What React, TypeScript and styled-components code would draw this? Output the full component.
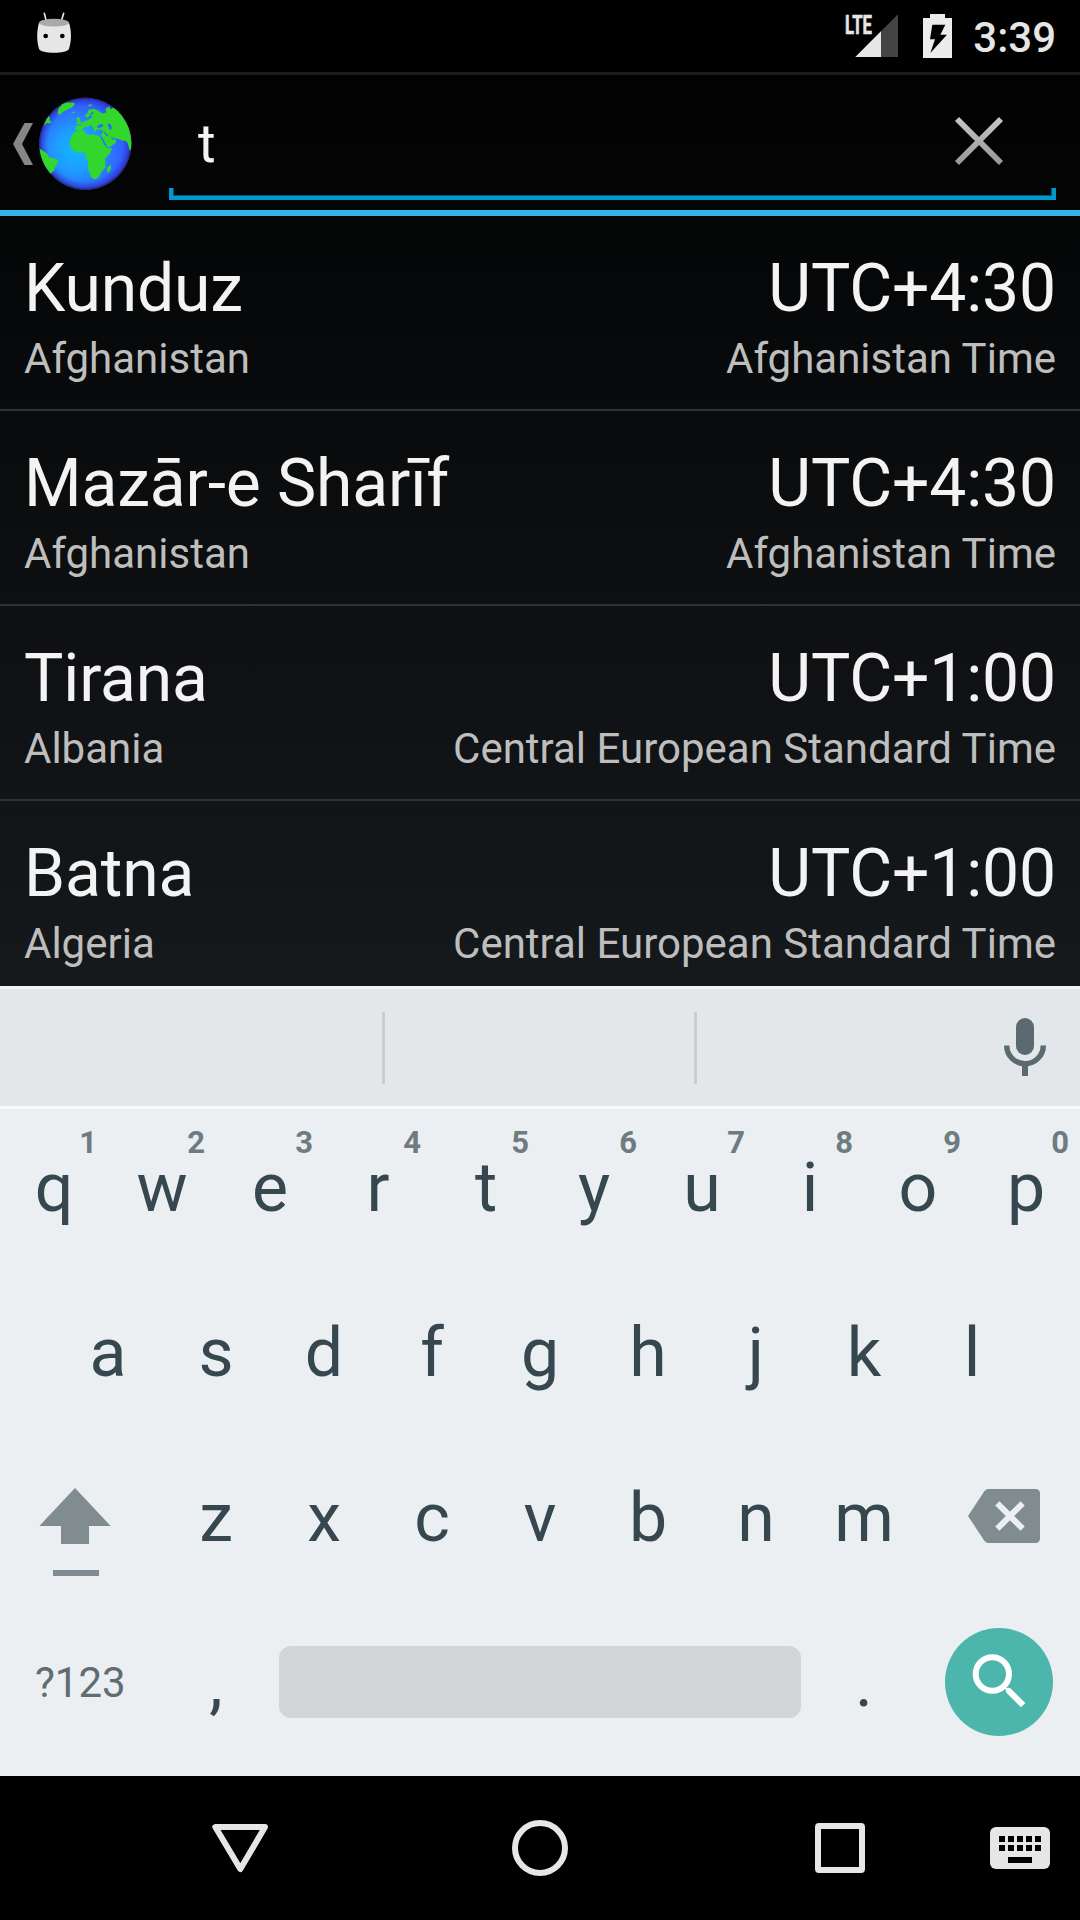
import React from 'react';
import styled, { createGlobalStyle } from 'styled-components';

const GlobalStyle = createGlobalStyle`
  * { box-sizing: border-box; }
  body { margin: 0; background: #000; }
  svg { display: block; flex: none; }
`;

const Screen = styled.div`
  width: 1080px;
  height: 1920px;
  overflow: hidden;
  display: flex;
  flex-direction: column;
  font-family: Roboto, 'Noto Sans', sans-serif;
  background: #000 linear-gradient(180deg, #000000 0, #272d33 1776px) no-repeat;
`;

const StatusBar = styled.header`
  height: 75px;
  flex: none;
  display: flex;
  align-items: flex-start;
  padding: 12px 24px 0 36px;
  background: #000;
  border-bottom: 3px solid #1c1c1c;
  color: #e6e6e6;
`;

const StatusIcons = styled.div`
  margin-left: auto;
  display: flex;
  align-items: flex-start;
`;

const Clock = styled.span`
  margin-left: 21px;
  font-size: 42px;
  font-weight: 500;
  line-height: 49px;
  margin-top: 1px;
`;

const ActionBar = styled.div`
  height: 141px;
  flex: none;
  display: flex;
  align-items: flex-start;
  padding: 20px 24px 0 13px;
  border-bottom: 6px solid #33b5e5;
`;

const UpButton = styled.button`
  display: flex;
  align-items: flex-start;
  padding: 2px 0 0;
  border: 0;
  background: none;
`;

const CaretSlot = styled.span`
  padding-top: 26px;
  width: 26px;
`;

const SearchField = styled.div`
  margin: 0 0 0 auto;
  width: 887px;
  height: 105px;
  display: flex;
  flex-direction: column;
`;

const FieldContent = styled.div`
  height: 93px;
  display: flex;
  justify-content: space-between;
  align-items: flex-start;
  padding: 17px 52px 0 29px;
`;

const Query = styled.span`
  font-size: 54px;
  line-height: 64px;
  color: #f3f3f3;
`;

const ClearSlot = styled.span`
  padding-top: 4px;
`;

const FieldUnderline = styled.div`
  height: 12px;
  flex: none;
  border: 4px solid #0099cc;
  border-width: 0 4px 4px;
  box-shadow: inset 1px -1px 0 #00577a, inset -1px 0 0 #00577a;
`;

const CityList = styled.ul`
  height: 770px;
  flex: none;
  overflow: hidden;
  margin: 0;
  padding: 0;
  list-style: none;
`;

const CityRow = styled.li`
  height: 195px;
  padding: 34px 24px 0;
  border-bottom: 2px solid #303235;
  display: flex;
  flex-direction: column;
  gap: 7px;
`;

const Line = styled.div<{ $primary?: boolean }>`
  display: flex;
  justify-content: space-between;
  white-space: nowrap;
  font-size: ${(p) => (p.$primary ? 66 : 42)}px;
  line-height: ${(p) => (p.$primary ? 77 : 49)}px;
  letter-spacing: ${(p) => (p.$primary ? '-0.15px' : 'normal')};
  color: ${(p) => (p.$primary ? '#f3f3f3' : '#bebebe')};
`;

const Suggestions = styled.div`
  height: 123px;
  flex: none;
  display: flex;
  background: #e3e7e9;
  border-top: 3px solid #f1f4f5;
  border-bottom: 3px solid #f5f7f9;
  padding-top: 23px;
`;

const Suggestion = styled.div<{ $width: number }>`
  width: ${(p) => p.$width}px;
  height: 72px;
  border-right: 3px solid #c9ced1;
`;

const MicSlot = styled.div`
  padding-top: 6px;
  margin: 0 34px 0 auto;
`;

const Keyboard = styled.div`
  height: 667px;
  flex: none;
  background: #ebeff2;
`;

const KeyRow = styled.div<{ $indent?: number }>`
  display: flex;
  height: 165px;
  padding-left: ${(p) => p.$indent ?? 0}px;
`;

const Key = styled.div<{ $width?: number }>`
  position: relative;
  width: ${(p) => p.$width ?? 108}px;
  flex: none;
  padding-top: 39px;
  text-align: center;
  font-size: 68px;
  line-height: 80px;
  color: #37474f;
`;

const KeyHint = styled.span`
  position: absolute;
  top: 15px;
  right: 11px;
  font-size: 31px;
  font-weight: 700;
  line-height: 37px;
  color: #6e7b81;
`;

const IconKey = styled.div<{ $width: number; $top: number; $left: number }>`
  width: ${(p) => p.$width}px;
  flex: none;
  padding: ${(p) => p.$top}px 0 0 ${(p) => p.$left}px;
`;

const SymbolsKey = styled.div`
  width: 162px;
  flex: none;
  padding: 54px 0 0 35px;
  font-size: 42px;
  line-height: 49px;
  color: #5f6d73;
`;

const SpaceKey = styled.div`
  width: 522px;
  height: 72px;
  flex: none;
  margin: 42px 9px 0;
  border-radius: 12px;
  background: #d1d5d8;
`;

const SearchKey = styled.div`
  width: 108px;
  height: 108px;
  flex: none;
  margin: 24px 0 0 27px;
  border-radius: 50%;
  background: #4db6ac;
  padding: 26px 0 0 27px;
`;

const NavBar = styled.nav`
  height: 144px;
  flex: none;
  display: flex;
  align-items: center;
  background: #000;
  padding: 0 30px 0 210px;
`;

const NavIcon = styled.span<{ $gap: number }>`
  margin-left: ${(p) => p.$gap}px;
`;

const DebugHead = () => (
  <svg width="36" height="42" viewBox="108 36 108 126">
    <path d="M133 40L139 64M191 40L184 64" stroke="#e6e6e6" strokeWidth="5" strokeLinecap="round" />
    <path d="M117 68C110 92 110 124 117 146C121 162 203 162 207 146C215 124 215 92 207 68Z" fill="#e6e6e6" />
    <ellipse cx="162" cy="68" rx="45" ry="11.5" fill="#a9a9a9" />
    <circle cx="137" cy="108" r="7" fill="#000" />
    <circle cx="187" cy="108" r="7" fill="#000" />
  </svg>
);

const SignalSlot = styled.span`
  margin-top: -8px;
`;

const Signal = () => (
  <svg width="56" height="56" viewBox="0 -8 56 56">
    <path d="M56 2.300V45H13.300Z" fill="#444" />
    <path d="M39 19.300V45H13.300Z" fill="#e6e6e6" />
    <text x="3" y="21.700" fontFamily="Roboto, sans-serif" fontWeight="700" fontSize="25.500" textLength="27" lengthAdjust="spacingAndGlyphs" fill="#e6e6e6" stroke="#e6e6e6" strokeWidth="0.600">LTE</text>
  </svg>
);

const BatterySlot = styled.span`
  margin-left: 25px;
`;

const Battery = () => (
  <svg width="29" height="48" viewBox="339 36 87 144">
    <path d="M339 54H360V42H405V54H426V174H339Z" fill="#ececec" />
    <path d="M367 74H406L391 104H411L361 159L375 118H360Z" fill="#000" />
  </svg>
);

const Caret = () => (
  <svg width="20" height="42" viewBox="0 0 20 42">
    <path d="M0 21L11.500 0H20L9 21L20 42H11.500Z" fill="#868686" />
  </svg>
);

const Globe = () => (
  <svg width="93" height="93" viewBox="116.500 291.500 279 279">
    <defs>
      <radialGradient id="sea" gradientUnits="userSpaceOnUse" cx="228" cy="450" r="180">
        <stop offset="0" stopColor="#10b8ff" />
        <stop offset="0.35" stopColor="#1e9cff" />
        <stop offset="0.7" stopColor="#2f68ff" />
        <stop offset="1" stopColor="#3048f4" />
      </radialGradient>
      <radialGradient id="rim" gradientUnits="userSpaceOnUse" cx="255.500" cy="431.500" r="138">
        <stop offset="0.82" stopColor="#3030d0" stopOpacity="0" />
        <stop offset="0.95" stopColor="#3030c0" stopOpacity="0.65" />
        <stop offset="1" stopColor="#20206c" stopOpacity="1" />
      </radialGradient>
      <clipPath id="disc"><circle cx="255.500" cy="431.500" r="138" /></clipPath>
    </defs>
    <g clipPath="url(#disc)">
      <rect x="116" y="291" width="280" height="280" fill="url(#sea)" />
      <rect x="116" y="291" width="280" height="280" fill="url(#rim)" />
      <g fill="#33d62c">
        <path d="M172 342L175 326L188 312L200 308L222 309L224 314L215 323L202 329L190 336L179 345Z" />
        <path d="M212 337L222 335L225 338L216 340ZM261 317L270 313L278 315L268 319Z" />
        <path d="M132 377L138 358L145 347L150 357L146 362L153 362L153 368L146 371L140 369L134 378Z" />
        <path d="M116 446L124 450L136 458L144 465L147 473L162 475L174 482L171 495L165 501L162 513L151 521L118 510Z" />
        <path d="M228 362L232 351L238 354L242 366L246 371L233 374L229 369L235 366Z" />
        <path d="M253 348L262 340L265 330L280 327L292 331L299 336L306 341L319 338L316 326L328 319L330 328L340 324L370 345L397 380V452L388 450L382 429L375 423L365 422L352 417L342 415L334 412L326 400L332 411L336 418L348 420L347 429L335 437L324 442L318 437L308 420L301 406L310 395L304 389L290 390L287 397L281 390L276 379L269 376L262 382L254 380L247 389L238 393L226 390L227 378L242 377L243 370L254 363L263 361L272 354L281 352L271 348L281 339L276 336L269 347L262 354Z" />
        <path d="M226 396L238 393L251 391L256 402L270 406L278 403L299 409L309 429L316 440L323 446L335 444L330 460L315 476L316 502L304 515L298 529L287 538L275 535L264 510L264 487L257 470L253 457L231 457L217 450L208 433L210 418L218 401Z" />
        <path d="M332 494L333 505L326 519L320 515L321 503Z" />
      </g>
      <path d="M294 376L304 372L310 378L301 384L290 384ZM322 373L328 371L335 379L333 391L327 388ZM304 410L319 436L315 438L302 412ZM313 396L325 408L321 410L311 399Z" fill="#246fff" />
    </g>
  </svg>
);

const ClearIcon = () => (
  <svg width="50" height="50" viewBox="0 0 50 50">
    <defs>
      <linearGradient id="clear" gradientUnits="userSpaceOnUse" x1="0" y1="0" x2="0" y2="50">
        <stop offset="0" stopColor="#c8c8c8" />
        <stop offset="1" stopColor="#969696" />
      </linearGradient>
    </defs>
    <path d="M3 3L47 47M47 3L3 47" stroke="url(#clear)" strokeWidth="5.800" />
  </svg>
);

const Mic = () => (
  <svg width="42" height="58" viewBox="0 0 42 58">
    <rect x="12" y="0" width="18" height="37" rx="9" fill="#5b6970" />
    <path d="M2.700 27A18.300 18.300 0 0 0 39.300 27" transform="translate(0 .5)" fill="none" stroke="#5b6970" strokeWidth="5.400" />
    <path d="M18 46H24V58H18Z" fill="#5b6970" />
  </svg>
);

const Shift = () => (
  <svg width="72" height="89" viewBox="117 84 216 267">
    <path d="M225 84L332 198H267V252H183V198H118Z" fill="#808c90" />
    <path d="M159 330H297V348H159Z" fill="#808c94" />
  </svg>
);

const Backspace = () => (
  <svg width="72" height="54" viewBox="624 87 216 162">
    <path d="M624 168L673 94Q678 87 686 87H826Q840 87 840 101V235Q840 249 826 249H686Q678 249 673 242Z" fill="#808c90" />
    <path d="M712 130L788 206M788 130L712 206" stroke="#ebeff2" strokeWidth="18" />
  </svg>
);

const Magnifier = () => (
  <svg width="54" height="54" viewBox="636 582 162 162">
    <circle cx="697" cy="642" r="50" fill="none" stroke="#fff" strokeWidth="18" />
    <path d="M732 684L740 684Q748 681 753 686L796 729L783 742L740 699Q737 695 738 690Z" fill="#fff" />
  </svg>
);

const BackIcon = () => (
  <svg width="60" height="56" viewBox="90 120 180 168">
    <path d="M106 141H255L181 267Z" fill="none" stroke="#e6e6e6" strokeWidth="18" strokeLinejoin="round" />
  </svg>
);

const HomeIcon = () => (
  <svg width="56" height="56" viewBox="0 0 56 56">
    <circle cx="28" cy="28" r="25" fill="none" stroke="#e6e6e6" strokeWidth="6" />
  </svg>
);

const RecentsIcon = () => (
  <svg width="50" height="50" viewBox="0 0 50 50">
    <path fillRule="evenodd" d="M4 0H46Q50 0 50 4V46Q50 50 46 50H4Q0 50 0 46V4Q0 0 4 0ZM6 6V44H44V6Z" fill="#e6e6e6" />
  </svg>
);

const KeyboardIcon = () => (
  <svg width="60" height="42" viewBox="0 0 60 42">
    <rect width="60" height="42" rx="6" fill="#e6e6e6" />
    {[9, 18, 27, 36, 45].map((x) => (
      <path key={x} d={`M${x} 9h6v6h-6zM${x} 18h6v6h-6z`} fill="#000" />
    ))}
    <path d="M18 30H42V36H18Z" fill="#000" />
  </svg>
);

const cities = [
  { name: 'Kunduz', country: 'Afghanistan', offset: 'UTC+4:30', zone: 'Afghanistan Time' },
  { name: 'Mazār-e Sharīf', country: 'Afghanistan', offset: 'UTC+4:30', zone: 'Afghanistan Time' },
  { name: 'Tirana', country: 'Albania', offset: 'UTC+1:00', zone: 'Central European Standard Time' },
  { name: 'Batna', country: 'Algeria', offset: 'UTC+1:00', zone: 'Central European Standard Time' },
];

export default function App() {
  return (
    <Screen>
      <GlobalStyle />
      <StatusBar>
        <DebugHead />
        <StatusIcons>
          <SignalSlot><Signal /></SignalSlot>
          <BatterySlot><Battery /></BatterySlot>
          <Clock>3:39</Clock>
        </StatusIcons>
      </StatusBar>
      <ActionBar>
        <UpButton aria-label="Back">
          <CaretSlot><Caret /></CaretSlot>
          <Globe />
        </UpButton>
        <SearchField>
          <FieldContent>
            <Query>t</Query>
            <ClearSlot><ClearIcon /></ClearSlot>
          </FieldContent>
          <FieldUnderline />
        </SearchField>
      </ActionBar>
      <CityList>
        {cities.map((c) => (
          <CityRow key={c.name}>
            <Line $primary><span>{c.name}</span><span>{c.offset}</span></Line>
            <Line><span>{c.country}</span><span>{c.zone}</span></Line>
          </CityRow>
        ))}
      </CityList>
      <Suggestions>
        <Suggestion $width={385} />
        <Suggestion $width={312} />
        <MicSlot><Mic /></MicSlot>
      </Suggestions>
      <Keyboard>
        <KeyRow>
          {[...'qwertyuiop'].map((k, i) => (
            <Key key={k}>{k}<KeyHint>{(i + 1) % 10}</KeyHint></Key>
          ))}
        </KeyRow>
        <KeyRow $indent={54}>
          {[...'asdfghjkl'].map((k) => <Key key={k}>{k}</Key>)}
        </KeyRow>
        <KeyRow>
          <IconKey $width={162} $top={49} $left={39}><Shift /></IconKey>
          {[...'zxcvbnm'].map((k) => <Key key={k}>{k}</Key>)}
          <IconKey $width={162} $top={50} $left={50}><Backspace /></IconKey>
        </KeyRow>
        <KeyRow>
          <SymbolsKey>?123</SymbolsKey>
          <Key>,</Key>
          <SpaceKey />
          <Key>.</Key>
          <SearchKey><Magnifier /></SearchKey>
        </KeyRow>
      </Keyboard>
      <NavBar>
        <NavIcon $gap={0}><BackIcon /></NavIcon>
        <NavIcon $gap={242}><HomeIcon /></NavIcon>
        <NavIcon $gap={247}><RecentsIcon /></NavIcon>
        <NavIcon $gap={125}><KeyboardIcon /></NavIcon>
      </NavBar>
    </Screen>
  );
}
